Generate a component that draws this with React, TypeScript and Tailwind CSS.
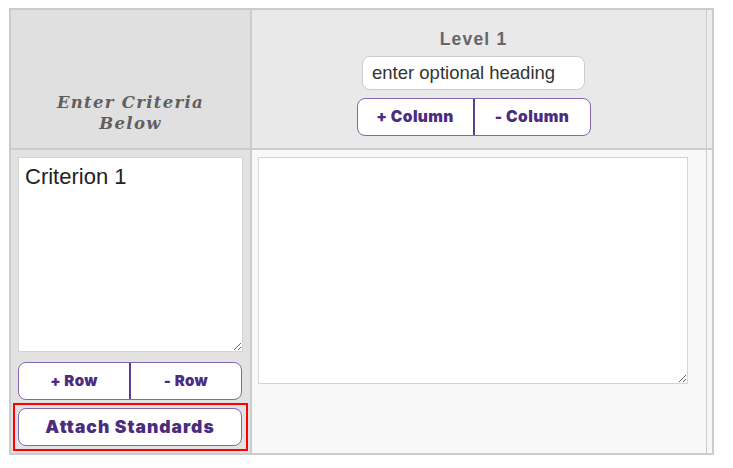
import React from 'react';

// Rubric builder: criteria column + one level column
const btnFont = { fontFamily: 'Inter, "DejaVu Sans", sans-serif' };

const SplitButtons: React.FC<{ left: string; right: string; className?: string; text?: string }> = ({ left, right, className, text }) => (
  <div className={`flex bg-white border-[1.5px] border-[#8368b0] rounded-[8px] overflow-hidden ${className ?? ''}`}>
    <button className={`flex-1 h-full font-black tracking-[0.4px] text-[#4b2c7f] ${text ?? 'text-[15px]'}`} style={btnFont}>
      {left}
    </button>
    <button className={`flex-1 h-full font-black tracking-[0.4px] text-[#4b2c7f] border-l-2 border-[#5c3d8f] ${text ?? 'text-[15px]'}`} style={btnFont}>
      {right}
    </button>
  </div>
);

const App: React.FC = () => {
  return (
    <div className="min-h-screen bg-white pl-[9px] pt-[8px]" style={{ fontFamily: '"Liberation Sans", Arial, sans-serif' }}>
      <div className="w-[705px] h-[447px] border-2 border-[#cccccc] grid grid-cols-[241px_455px_1fr] grid-rows-[140px_1fr]">
        {/* Header: criteria label */}
        <div className="bg-[#e0e0e0] border-r-2 border-b-2 border-[#cccccc] flex items-end justify-center pb-[14px]">
          <div
            className="text-center text-[#5f5f5f] italic font-bold text-[16.5px] leading-[21px] tracking-[1.3px]"
            style={{ fontFamily: '"DejaVu Serif", serif' }}
          >
            Enter Criteria
            <br />
            Below
          </div>
        </div>

        {/* Header: level */}
        <div className="bg-[#e9e9e9] border-r border-b-2 border-[#cccccc] flex flex-col items-center pt-[19px] pr-[11px]">
          <div className="text-[17.5px] leading-[20px] font-bold text-[#666666] tracking-[1.2px]">Level 1</div>
          <input
            className="mt-[7px] w-[223px] h-[34px] bg-white border border-[#cccccc] rounded-[8px] px-[9px] text-[18.5px] text-[#333333] outline-none"
            defaultValue="enter optional heading"
          />
          <SplitButtons left="+ Column" right="- Column" className="mt-[8px] w-[234px] h-[38px]" text="text-[15.5px]" />
        </div>

        <div className="bg-[#ececec] border-b-2 border-[#cccccc]" />

        {/* Body: criterion */}
        <div className="bg-[#e2e2e2] border-r-2 border-[#cccccc] px-[7px] pt-[7px] flex flex-col">
          <textarea
            className="w-[225px] h-[195px] bg-white border border-[#d4d4d4] px-[6px] pt-[6px] text-[22px] leading-[25px] text-[#222222] outline-none"
            defaultValue="Criterion 1"
          />
          <SplitButtons left="+ Row" right="- Row" className="mt-[10px] w-[224px] h-[38px]" text="text-[15px]" />
          <div className="mt-[3px] -mx-[5px] border-2 border-[#ff0000] p-[3px]">
            <button
              className="w-[224px] h-[38px] bg-white border-[1.5px] border-[#8368b0] rounded-[8px] text-[17.5px] font-black text-[#4b2c7f] tracking-[1px]"
              style={btnFont}
            >
              Attach Standards
            </button>
          </div>
        </div>

        {/* Body: level description */}
        <div className="bg-[#f8f8f8] border-r border-[#cccccc] pl-[6px] pt-[7px]">
          <textarea className="w-[430px] h-[227px] bg-white border border-[#d4d4d4] outline-none" />
        </div>

        <div className="bg-[#f8f8f8]" />
      </div>
    </div>
  );
};

export default App;
